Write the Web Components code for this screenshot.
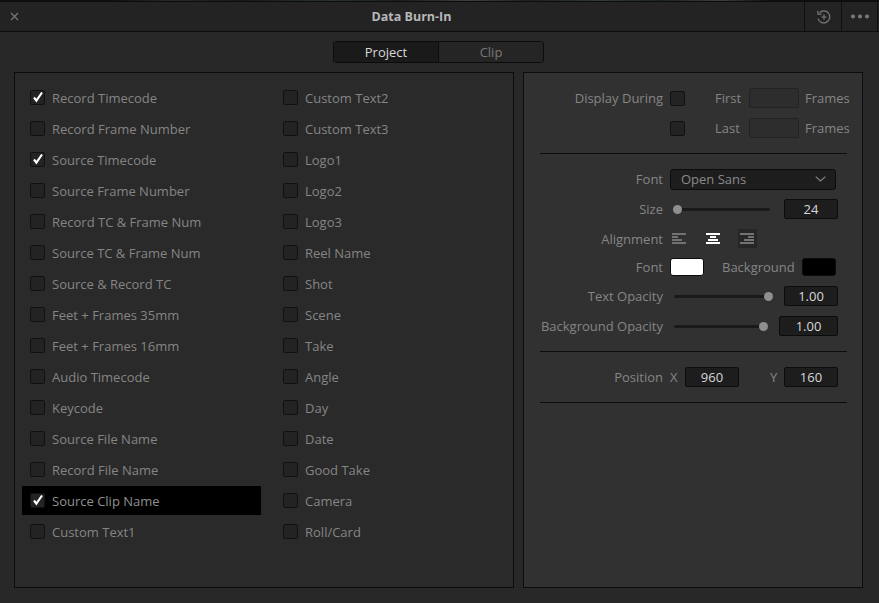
<!DOCTYPE html>
<html>
<head>
<meta charset="utf-8">
<title>Data Burn-In</title>
<style>
    html, body { margin: 0; padding: 0; background: #282828; }
    body { width: 879px; height: 603px; overflow: hidden; font: 13px "Open Sans", sans-serif; color: #858585; }
</style>
</head>
<body>
<burn-in-window>
    <title-bar slot="head">Data Burn-In</title-bar>
    <seg-tabs slot="head"></seg-tabs>

    <option-panel slot="left">
        <check-item checked>Record Timecode</check-item>
        <check-item>Record Frame Number</check-item>
        <check-item checked>Source Timecode</check-item>
        <check-item>Source Frame Number</check-item>
        <check-item>Record TC &amp; Frame Num</check-item>
        <check-item>Source TC &amp; Frame Num</check-item>
        <check-item>Source &amp; Record TC</check-item>
        <check-item>Feet + Frames 35mm</check-item>
        <check-item>Feet + Frames 16mm</check-item>
        <check-item>Audio Timecode</check-item>
        <check-item>Keycode</check-item>
        <check-item>Source File Name</check-item>
        <check-item>Record File Name</check-item>
        <check-item checked selected>Source Clip Name</check-item>
        <check-item>Custom Text1</check-item>
        <check-item>Custom Text2</check-item>
        <check-item>Custom Text3</check-item>
        <check-item>Logo1</check-item>
        <check-item>Logo2</check-item>
        <check-item>Logo3</check-item>
        <check-item>Reel Name</check-item>
        <check-item>Shot</check-item>
        <check-item>Scene</check-item>
        <check-item>Take</check-item>
        <check-item>Angle</check-item>
        <check-item>Day</check-item>
        <check-item>Date</check-item>
        <check-item>Good Take</check-item>
        <check-item>Camera</check-item>
        <check-item>Roll/Card</check-item>
    </option-panel>

    <settings-panel slot="right"></settings-panel>
</burn-in-window>

<script>
// Outer frame: header rows on top, the two panels below
class BurnInWindow extends HTMLElement {
    constructor() {
        super();
        this.attachShadow({ mode: 'open' }).innerHTML = `
            <style>
                :host { display: block; width: 879px; height: 603px; box-sizing: border-box; padding-top: 1px;
                        background: #282828 linear-gradient(90deg, #0e0f0f 0, #0e0f0f 110px, #252b2b 170px, #161a1a 240px, #2a3232 330px, #1a2020 400px, #39403f 470px, #1c2222 530px, #323a3a 600px, #1c2424 660px, #3a3f3d 720px, #0e0f0f 770px) no-repeat 0 0 / 100% 1px; }
                .panels { display: flex; gap: 9px; padding: 0 16px 0 14px; }
                ::slotted([slot="left"]) { flex: 0 0 500px; min-width: 0; }
                ::slotted([slot="right"]) { flex: 0 0 340px; min-width: 0; }
            </style>
            <slot name="head"></slot>
            <div class="panels">
                <slot name="left"></slot>
                <slot name="right"></slot>
            </div>
        `;
    }
}

class TitleBar extends HTMLElement {
    constructor() {
        super();
        this.attachShadow({ mode: 'open' }).innerHTML = `
            <style>
                :host { display: flex; align-items: center; height: 29px; border-top: 1px solid #0c0c0c; border-bottom: 1px solid #0c0c0c; margin-bottom: 9px;
                        background: #232323; position: relative; }
                .close { width: 28px; height: 100%; display: flex; align-items: center; justify-content: center; }
                .title { position: absolute; left: 0; right: 56px; text-align: center; font-weight: 700; font-size: 12.5px; color: #b8b8b8; }
                .spacer { flex: 1; }
                .btn { height: 100%; display: flex; align-items: center; justify-content: center; border-left: 1px solid #0f0f0f; box-sizing: border-box; }
                .history { width: 37px; }
                .more { width: 36px; }
                .end { width: 1px; height: 100%; background: #0f0f0f; margin-right: 1px; }
                svg { display: block; }
            </style>
            <div class="close">
                <svg width="9" height="9" viewBox="0 0 9 9"><path d="M1 1l7 7M8 1L1 8" stroke="#777" stroke-width="1.2" fill="none"/></svg>
            </div>
            <div class="title"><slot></slot></div>
            <div class="spacer"></div>
            <div class="btn history">
                <svg width="15" height="14" viewBox="0 0 15 14" fill="none" stroke="#7c7c7c" stroke-width="1.2">
                    <path d="M3.6 2.6A6 6 0 1 1 2 8.6"/>
                    <path d="M1.6 .8l.6 3.6 3.6-.4"/>
                    <path d="M8 4.4v5.2M5.4 7h5.2"/>
                </svg>
            </div>
            <div class="btn more">
                <svg width="18" height="5" viewBox="0 0 18 5" fill="#7c7c7c"><circle cx="2" cy="2.5" r="2"/><circle cx="9" cy="2.5" r="2"/><circle cx="16" cy="2.5" r="2"/></svg>
            </div>
            <div class="end"></div>
        `;
    }
}

class SegTabs extends HTMLElement {
    constructor() {
        super();
        this.attachShadow({ mode: 'open' }).innerHTML = `
            <style>
                :host { display: flex; height: 22px; box-sizing: border-box; margin-bottom: 9px; padding-left: 333px; }
                .wrap { display: flex; border: 1px solid #0c0c0c; border-radius: 3px; overflow: hidden; }
                .tab { width: 104px; display: flex; align-items: center; justify-content: center; background: #252525; color: #777; }
                .tab.on { width: 105px; box-sizing: border-box; background: #1a1a1a; color: #d8d8d8; border-right: 1px solid #0c0c0c; }
            </style>
            <div class="wrap">
                <div class="tab on">Project</div>
                <div class="tab">Clip</div>
            </div>
        `;
    }
}

// Left panel: two columns of 15 rows, filled column by column
class OptionPanel extends HTMLElement {
    constructor() {
        super();
        this.attachShadow({ mode: 'open' }).innerHTML = `
            <style>
                :host { display: block; height: 516px; box-sizing: border-box; border: 1px solid #0c0c0c; background: #2a2a2a; padding: 10px 0 0 7px; }
                .cols { display: grid; grid-auto-flow: column; grid-template-rows: repeat(15, 31px); grid-template-columns: 239px 1fr; column-gap: 14px; }
            </style>
            <div class="cols"><slot></slot></div>
        `;
    }
}

class CheckItem extends HTMLElement {
    constructor() {
        super();
        this.attachShadow({ mode: 'open' }).innerHTML = `
            <style>
                :host { display: flex; align-items: center; gap: 7px; height: 29px; padding-left: 8px; box-sizing: border-box; white-space: nowrap; }
                :host([selected]) { background: #000; color: #909090; }
            </style>
            <check-box></check-box>
            <span><slot></slot></span>
        `;
    }
    connectedCallback() {
        if (this.hasAttribute('checked')) {
            this.shadowRoot.querySelector('check-box').setAttribute('checked', '');
        }
    }
}

class CheckBox extends HTMLElement {
    constructor() {
        super();
        this.attachShadow({ mode: 'open' }).innerHTML = `
            <style>
                :host { display: block; flex: none; width: 15px; height: 15px; box-sizing: border-box; border: 1px solid #111; border-radius: 2px; background: #232323; position: relative; }
                svg { position: absolute; left: 1px; top: 0; display: none; }
                :host([checked]) svg { display: block; }
            </style>
            <svg width="12" height="12" viewBox="0 0 12 12"><path d="M2 6.5l2.4 3.2L10 1.5" stroke="#fff" stroke-width="2.1" fill="none"/></svg>
        `;
    }
}

class NumField extends HTMLElement {
    constructor() {
        super();
        this.attachShadow({ mode: 'open' }).innerHTML = `
            <style>
                :host { display: flex; flex: none; align-items: center; justify-content: center; height: 20px; box-sizing: border-box; width: 54px; border: 1px solid #0c0c0c; border-radius: 2px; background: #1d1d1d; color: #d8d8d8; }
                :host([empty]) { width: 50px; background: #2d2d2d; border-color: #232323; }
            </style>
            <slot></slot>
        `;
    }
}

class SlideBar extends HTMLElement {
    static get observedAttributes() { return ['at']; }
    constructor() {
        super();
        this.attachShadow({ mode: 'open' }).innerHTML = `
            <style>
                :host { display: block; flex: none; height: 9px; position: relative; }
                .track { position: absolute; left: 0; right: 0; top: 3px; height: 3px; border-radius: 2px; background: #1a1a1a; }
                .knob { position: absolute; top: 0; width: 9px; height: 9px; border-radius: 50%; background: #8f8f8f; }
            </style>
            <div class="track"></div>
            <div class="knob"></div>
        `;
    }
    attributeChangedCallback(name, oldVal, val) {
        this.shadowRoot.querySelector('.knob').style.left = val + 'px';
    }
}

class AlignIcon extends HTMLElement {
    constructor() {
        super();
        this.attachShadow({ mode: 'open' }).innerHTML = `
            <style>
                :host { display: block; flex: none; box-sizing: border-box; width: 19px; height: 19px; padding: 4px 0 0 2px; align-self: flex-start; }
                :host([hover]) { background: #262626; }
                svg { display: block; }
            </style>
            <svg width="14" height="11" viewBox="0 0 14 11" shape-rendering="crispEdges"></svg>
        `;
    }
    connectedCallback() {
        const kind = this.getAttribute('kind');
        const col = this.hasAttribute('on') ? '#fff' : '#727272';
        let out = '';
        [14, 6, 10, 14].forEach((w, i) => {
            let x = 0;
            if (kind === 'center') x = (14 - w) / 2;
            if (kind === 'right') x = 14 - w;
            out += `<rect x="${x}" y="${i * 3}" width="${w}" height="2" fill="${col}"/>`;
        });
        this.shadowRoot.querySelector('svg').innerHTML = out;
    }
}

// Right panel: label column on the left, controls on the right
class SettingsPanel extends HTMLElement {
    constructor() {
        super();
        this.attachShadow({ mode: 'open' }).innerHTML = `
            <style>
                :host { display: block; height: 516px; box-sizing: border-box; border: 1px solid #0c0c0c; background: #313131; padding: 15px 15px 0 16px; }
                .row { display: flex; align-items: center; height: 20px; white-space: nowrap; }
                .row span { flex: none; }
                .lab { width: 123px; margin-right: 7px; text-align: right; }
                hr { border: 0; height: 1px; background: #0c0c0c; margin: 0; }
                .sel { width: 166px; height: 21px; box-sizing: border-box; border: 1px solid #0c0c0c; border-radius: 3px; background: #1d1d1d; color: #8a8a8a; display: flex; align-items: center; justify-content: space-between; padding: 0 9px 0 10px; }
                .swatch { flex: none; width: 34px; height: 18px; box-sizing: border-box; border-radius: 3px; border: 1px solid #0c0c0c; }
                num-field.wide { width: 59px; }
            </style>
            <div class="row" style="margin-bottom:10px">
                <span class="lab">Display During</span>
                <check-box></check-box>
                <span style="margin-left:30px;width:34px">First</span>
                <num-field empty></num-field>
                <span style="margin-left:6px">Frames</span>
            </div>
            <div class="row" style="margin-bottom:15px">
                <span class="lab"></span>
                <check-box></check-box>
                <span style="margin-left:30px;width:34px">Last</span>
                <num-field empty></num-field>
                <span style="margin-left:6px">Frames</span>
            </div>
            <hr>
            <div class="row" style="margin-top:15px;margin-bottom:10px">
                <span class="lab">Font</span>
                <div class="sel">Open Sans
                    <svg width="11" height="6" viewBox="0 0 11 6"><path d="M.7.7l4.8 4.3L10.3.7" stroke="#888" stroke-width="1.1" fill="none"/></svg>
                </div>
            </div>
            <div class="row" style="margin-bottom:10px">
                <span class="lab">Size</span>
                <slide-bar at="0" style="width:97px;margin-left:3px"></slide-bar>
                <num-field style="margin-left:14px">24</num-field>
            </div>
            <div class="row" style="margin-bottom:8px">
                <span class="lab">Alignment</span>
                <align-icon kind="left"></align-icon>
                <align-icon kind="center" on style="margin-left:15px"></align-icon>
                <align-icon kind="right" hover style="margin-left:15px"></align-icon>
            </div>
            <div class="row" style="margin-bottom:9px">
                <span class="lab">Font</span>
                <div class="swatch" style="background:#fff"></div>
                <span style="margin-left:18px;margin-right:7px">Background</span>
                <div class="swatch" style="background:#000"></div>
            </div>
            <div class="row" style="margin-bottom:10px">
                <span class="lab">Text Opacity</span>
                <slide-bar at="90" style="width:96px;margin-left:4px"></slide-bar>
                <num-field style="margin-left:14px">1.00</num-field>
            </div>
            <div class="row" style="margin-bottom:15px">
                <span class="lab">Background Opacity</span>
                <slide-bar at="85" style="width:91px;margin-left:4px"></slide-bar>
                <num-field class="wide" style="margin-left:14px">1.00</num-field>
            </div>
            <hr>
            <div class="row" style="margin-top:15px;margin-bottom:15px">
                <span class="lab">Position</span>
                <span style="width:15px">X</span>
                <num-field>960</num-field>
                <span style="margin-left:31px;width:14px">Y</span>
                <num-field>160</num-field>
            </div>
            <hr>
        `;
    }
}

customElements.define('burn-in-window', BurnInWindow);
customElements.define('title-bar', TitleBar);
customElements.define('seg-tabs', SegTabs);
customElements.define('option-panel', OptionPanel);
customElements.define('check-box', CheckBox);
customElements.define('check-item', CheckItem);
customElements.define('num-field', NumField);
customElements.define('slide-bar', SlideBar);
customElements.define('align-icon', AlignIcon);
customElements.define('settings-panel', SettingsPanel);
</script>
</body>
</html>
